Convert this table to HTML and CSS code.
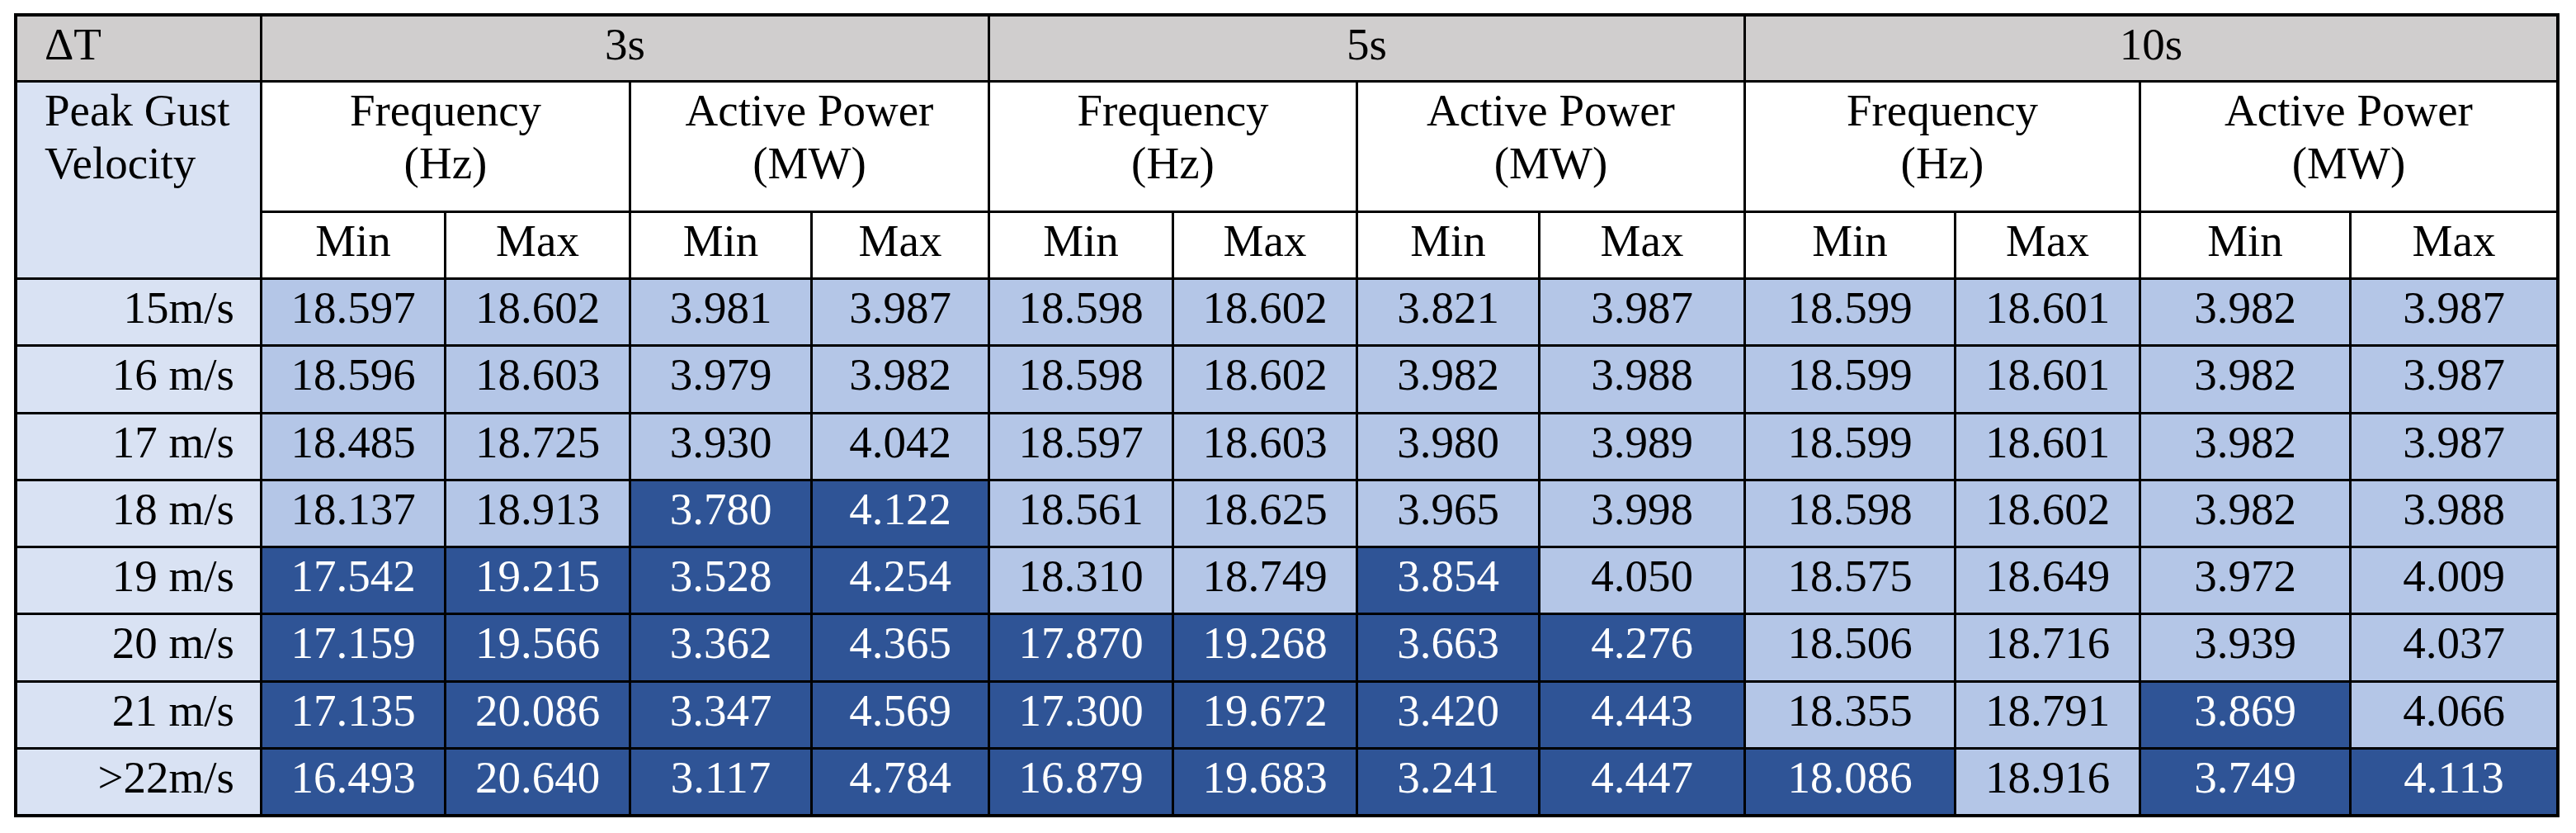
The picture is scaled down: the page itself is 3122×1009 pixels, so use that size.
FILE: index.html
```html
<!DOCTYPE html>
<html>
<head>
<meta charset="utf-8">
<link rel="stylesheet" href="styles.css">
</head>
<body>
<div class="tbl">
  <div class="c gray left">ΔT</div>
  <div class="c gray span4">3s</div>
  <div class="c gray span4">5s</div>
  <div class="c gray span4">10s</div>

  <div class="c lab left rows2">Peak Gust<br>Velocity</div>
  <div class="c wh span2">Frequency<br>(Hz)</div>
  <div class="c wh span2">Active Power<br>(MW)</div>
  <div class="c wh span2">Frequency<br>(Hz)</div>
  <div class="c wh span2">Active Power<br>(MW)</div>
  <div class="c wh span2">Frequency<br>(Hz)</div>
  <div class="c wh span2">Active Power<br>(MW)</div>

  <div class="c wh">Min</div><div class="c wh">Max</div>
  <div class="c wh">Min</div><div class="c wh">Max</div>
  <div class="c wh">Min</div><div class="c wh">Max</div>
  <div class="c wh">Min</div><div class="c wh">Max</div>
  <div class="c wh">Min</div><div class="c wh">Max</div>
  <div class="c wh">Min</div><div class="c wh">Max</div>

  <div class="c lab right">15m/s</div>
  <div class="c lt">18.597</div><div class="c lt">18.602</div><div class="c lt">3.981</div><div class="c lt">3.987</div>
  <div class="c lt">18.598</div><div class="c lt">18.602</div><div class="c lt">3.821</div><div class="c lt">3.987</div>
  <div class="c lt">18.599</div><div class="c lt">18.601</div><div class="c lt">3.982</div><div class="c lt">3.987</div>

  <div class="c lab right">16 m/s</div>
  <div class="c lt">18.596</div><div class="c lt">18.603</div><div class="c lt">3.979</div><div class="c lt">3.982</div>
  <div class="c lt">18.598</div><div class="c lt">18.602</div><div class="c lt">3.982</div><div class="c lt">3.988</div>
  <div class="c lt">18.599</div><div class="c lt">18.601</div><div class="c lt">3.982</div><div class="c lt">3.987</div>

  <div class="c lab right">17 m/s</div>
  <div class="c lt">18.485</div><div class="c lt">18.725</div><div class="c lt">3.930</div><div class="c lt">4.042</div>
  <div class="c lt">18.597</div><div class="c lt">18.603</div><div class="c lt">3.980</div><div class="c lt">3.989</div>
  <div class="c lt">18.599</div><div class="c lt">18.601</div><div class="c lt">3.982</div><div class="c lt">3.987</div>

  <div class="c lab right">18 m/s</div>
  <div class="c lt">18.137</div><div class="c lt">18.913</div><div class="c dk">3.780</div><div class="c dk">4.122</div>
  <div class="c lt">18.561</div><div class="c lt">18.625</div><div class="c lt">3.965</div><div class="c lt">3.998</div>
  <div class="c lt">18.598</div><div class="c lt">18.602</div><div class="c lt">3.982</div><div class="c lt">3.988</div>

  <div class="c lab right">19 m/s</div>
  <div class="c dk">17.542</div><div class="c dk">19.215</div><div class="c dk">3.528</div><div class="c dk">4.254</div>
  <div class="c lt">18.310</div><div class="c lt">18.749</div><div class="c dk">3.854</div><div class="c lt">4.050</div>
  <div class="c lt">18.575</div><div class="c lt">18.649</div><div class="c lt">3.972</div><div class="c lt">4.009</div>

  <div class="c lab right">20 m/s</div>
  <div class="c dk">17.159</div><div class="c dk">19.566</div><div class="c dk">3.362</div><div class="c dk">4.365</div>
  <div class="c dk">17.870</div><div class="c dk">19.268</div><div class="c dk">3.663</div><div class="c dk">4.276</div>
  <div class="c lt">18.506</div><div class="c lt">18.716</div><div class="c lt">3.939</div><div class="c lt">4.037</div>

  <div class="c lab right">21 m/s</div>
  <div class="c dk">17.135</div><div class="c dk">20.086</div><div class="c dk">3.347</div><div class="c dk">4.569</div>
  <div class="c dk">17.300</div><div class="c dk">19.672</div><div class="c dk">3.420</div><div class="c dk">4.443</div>
  <div class="c lt">18.355</div><div class="c lt">18.791</div><div class="c dk">3.869</div><div class="c lt">4.066</div>

  <div class="c lab right">&gt;22m/s</div>
  <div class="c dk">16.493</div><div class="c dk">20.640</div><div class="c dk">3.117</div><div class="c dk">4.784</div>
  <div class="c dk">16.879</div><div class="c dk">19.683</div><div class="c dk">3.241</div><div class="c dk">4.447</div>
  <div class="c dk">18.086</div><div class="c lt">18.916</div><div class="c dk">3.749</div><div class="c dk">4.113</div>
</div>
</body>
</html>
```
FILE: styles.css
```css
html, body {
  margin: 0;
  padding: 0;
  background: #ffffff;
}
body {
  padding: 16px 0 0 17px;
}
.tbl {
  display: grid;
  width: 3085px;
  box-sizing: border-box;
  grid-template-columns: 294px 220px 221px 217px 212px 220px 220px 218px 246px 252px 221px 252px 248px;
  grid-template-rows: 77px 155px 78px repeat(8, 78.25px);
  gap: 3px;
  padding: 4px;
  background: #000000;
  font-family: "Liberation Serif", "Times New Roman", serif;
  font-size: 55px;
  line-height: 64px;
  color: #000000;
}
.c {
  padding: 2px 0 0 0;
  text-align: center;
  white-space: nowrap;
  overflow: hidden;
}
.left { text-align: left; padding-left: 33px; }
.right { text-align: right; padding-right: 31px; }
.gray { background: #d0cece; }
.wh { background: #ffffff; }
.lab { background: #d9e2f3; }
.lt { background: #b4c6e7; }
.dk { background: #2f5496; color: #ffffff; }
.span4 { grid-column: span 4; }
.span2 { grid-column: span 2; }
.rows2 { grid-row: span 2; }
```
